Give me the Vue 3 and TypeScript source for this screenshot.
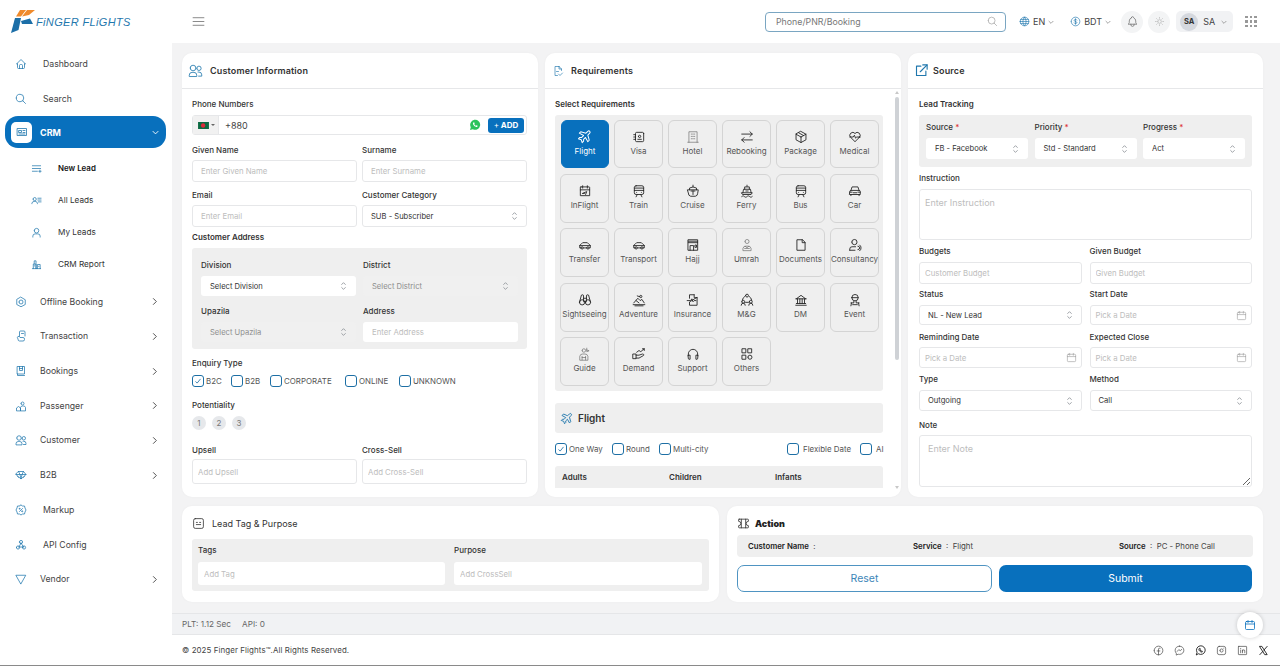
<script setup lang="ts">
import { h } from 'vue'

const c = (x: number, y: number, r: number) => `M${x - r} ${y}a${r} ${r} 0 1 0 ${2 * r} 0a${r} ${r} 0 1 0 ${-2 * r} 0`

const icons: Record<string, string[]> = {
  home: ['M5 12H3l9-9 9 9h-2', 'M5 12v7a2 2 0 0 0 2 2h10a2 2 0 0 0 2-2v-7', 'M9 21v-6a2 2 0 0 1 2-2h2a2 2 0 0 1 2 2v6'],
  search: [c(10, 10, 7.5), 'M21 21l-5.5-5.5'],
  idcard: ['M3 5h18v14H3z', 'M6 9h5v4H6z', 'M6 16h12', 'M14 9h4', 'M14 13h4'],
  newlead: ['M3 6h18', 'M3 12h18', 'M3 18h11', 'M17 18h5', 'M19.5 15.5v5'],
  allleads: [c(8, 9, 3.5), 'M2 19v-1a5 5 0 0 1 5-4h2a5 5 0 0 1 5 4v1', 'M15 7h7', 'M15 11h7', 'M16 15h6'],
  user: [c(12, 8, 5), 'M4 22v-2a5 5 0 0 1 5-5h6a5 5 0 0 1 5 5v2'],
  report: ['M3 21h18', 'M5 21V11h6v10', 'M11 21V4h-4v7', 'M14 21v-9h6v9', 'M7 15h1', 'M16.5 16h1'],
  offline: ['M12 2.5l8.5 5v9.5L12 21.500l-8.500-4.500V7.500z', c(12, 12, 4)],
  transaction: ['M9 13V4a2 2 0 0 1 2-2h7a2 2 0 0 1 2 2v8', 'M13 7h4', 'M5 14a2 2 0 0 1 3-1l2 2h6a3 3 0 0 1 3 3v1a3 3 0 0 1-3 3H9a3 3 0 0 1-3-3z'],
  bookings: ['M5 3h14v15H5z', 'M5 18v3h14', 'M9 3v8h6V3', 'M9 7h6'],
  passenger: [c(15, 7, 3), 'M3 21v-5l4-3 4 3v5z', 'M11 21v-6a4 4 0 0 1 4-3h2a4 4 0 0 1 4 3v6z'],
  users: [c(8, 8, 4.500), 'M2 21v-1.500a4.500 4.500 0 0 1 4.500-4.500h3a4.500 4.500 0 0 1 4.500 4.500V21z', c(17.5, 8.5, 3.500), 'M16 14.500h1.500a4.500 4.500 0 0 1 4.500 4.500v2h-5'],
  b2b: ['M7 5h10l5 6-10 9L2 11z', 'M2 11h20', 'M7 5l3 6 2 9 2-9 3-6', 'M5 15l2 2', 'M19 15l-2 2'],
  markup: ['M12 2l3 2h4l1 4 2 4-2 4-1 4h-4l-3 2-3-2H5l-1-4-2-4 2-4 1-4h4z', 'M9 15l6-6', c(9.5, 9.5, 1), c(14.5, 14.5, 1)],
  api: ['M12 8l-4 8', 'M8 16h9', 'M12 8l5 8', c(12, 6, 3.200), c(6, 17, 3.200), c(18, 17, 3.200)],
  vendor: ['M2.500 4.500h19L12 21.500z'],
  hamburger: ['M2 5h20', 'M2 12h20', 'M2 19h20'],
  globe: [c(12, 12, 9.500), 'M2.500 12h19', 'M3.500 7.500h17', 'M3.500 16.500h17', 'M12 2.500a14 14 0 0 1 0 19a14 14 0 0 1 0-19'],
  dollar: [c(12, 12, 9.500), 'M15 9a3 2.200 0 0 0-3-1.500c-2 0-3 1-3 2.200 0 3 6 1.600 6 4.600 0 1.200-1 2.200-3 2.200a3 2.200 0 0 1-3-1.500', 'M12 6v12'],
  bell: ['M10 5a2 2 0 1 1 4 0a7 7 0 0 1 4 6v3a4 4 0 0 0 2 3H4a4 4 0 0 0 2-3v-3a7 7 0 0 1 4-6', 'M9 17v1a3 3 0 0 0 6 0v-1'],
  sun: [c(12, 12, 4), 'M3 12h2', 'M19 12h2', 'M12 3v2', 'M12 19v2', 'M5.600 5.600l1.400 1.400', 'M17 17l1.400 1.400', 'M17 7l1.400-1.400', 'M5.600 18.400L7 17'],
  reqfile: ['M14 3H6v18h5', 'M14 3l5 5v3', 'M14 3v5h5', 'M9 13h4', 'M13 18l3 3 5-5'],
  external: ['M11 5H4v15h15v-7', 'M10 14L21 3', 'M14 3h7v7'],
  tagface: ['M6 3h12a3 3 0 0 1 3 3v12a3 3 0 0 1-3 3H6a3 3 0 0 1-3-3V6a3 3 0 0 1 3-3z', 'M8 10h2', 'M14 10h2', 'M8 14h8'],
  ticket: ['M4 4h16a1 1 0 0 1 1 1v3a4 4 0 0 0 0 8v3a1 1 0 0 1-1 1H4a1 1 0 0 1-1-1v-3a4 4 0 0 0 0-8V5a1 1 0 0 1 1-1z', 'M8 4v16', 'M16 4v16'],
  calendar: ['M5 5h14a2 2 0 0 1 2 2v12a2 2 0 0 1-2 2H5a2 2 0 0 1-2-2V7a2 2 0 0 1 2-2z', 'M3 10h18', 'M8 3v4', 'M16 3v4'],
  plane: ['M16 10h4a2 2 0 0 1 0 4h-4l-4 7h-3l2-7H7l-2 2H2l2-4-2-4h3l2 2h4L9 3h3z'],
  visa: ['M20 6v12a2 2 0 0 1-2 2H8a2 2 0 0 1-2-2V6a2 2 0 0 1 2-2h10a2 2 0 0 1 2 2z', 'M10 16h6', c(13, 11, 2), 'M3 8h3', 'M3 12h3', 'M3 16h3'],
  hotel: ['M5 21V3h14v18', 'M3 21h18', 'M9 7h2', 'M13 7h2', 'M9 11h2', 'M13 11h2', 'M9 15h2', 'M13 15h2'],
  rebooking: ['M21 7H3', 'M17 11l4-4-4-4', 'M7 21l-4-4 4-4', 'M3 17h18'],
  pkg: ['M12 2.500l8.500 4.700v9.600L12 21.500l-8.500-4.700V7.200z', 'M12 12l8.500-4.800', 'M12 12v9.500', 'M12 12L3.500 7.200', 'M8 4.800l8.500 4.800'],
  medical: ['M19.500 12.600L12 20l-7.500-7.400A5 5 0 1 1 12 6a5 5 0 1 1 7.500 6.600z', 'M3 12h6l2-3 2 5 2-2h6'],
  inflight: ['M5 5h14a1 1 0 0 1 1 1v14H4V6a1 1 0 0 1 1-1z', 'M4 10h16', 'M8 3v4', 'M16 3v4', 'M8 16l7-3-2 5-1.500-1.500z'],
  train: ['M7 3h10a3 3 0 0 1 3 3v9a3 3 0 0 1-3 3H7a3 3 0 0 1-3-3V6a3 3 0 0 1 3-3z', 'M4 11h16', 'M4 7h16', 'M8 14.500h.01', 'M16 14.500h.01', 'M7 22l2-4', 'M17 22l-2-4'],
  cruise: ['M12 2v3', 'M6 10V7l6-2 6 2v3', 'M3 10h18l-1 6a5 5 0 0 1-4 5H8a5 5 0 0 1-4-5z', 'M8.500 12h7', 'M12 12v6'],
  ferry: ['M12 2v2', 'M8 9V5h8v4', 'M5 15l1-6h12l1 6', 'M3 15h18l-2 3H5z', 'M3 21.500c2-1.500 3-1.500 4.500 0s3 1.500 4.500 0 3-1.500 4.500 0 3 1.500 4.500 0', 'M10 12h4'],
  car: ['M5 11l2-6h10l2 6', 'M3 13a2 2 0 0 1 2-2h14a2 2 0 0 1 2 2v5H3z', 'M3 14h4', 'M17 14h4', 'M9 15h6', 'M5 18v2', 'M19 18v2'],
  transfer: ['M5 17H3v-4a3 3 0 0 1 2-2l3-3h8l3 3a3 3 0 0 1 2 2v4h-2', 'M9 17h6', c(7, 17, 2), c(17, 17, 2), 'M3 13h18'],
  hajj: ['M4 3h16v18H4z', 'M4 8h16', 'M4 5.500h16', 'M7 21v-8h6v8', 'M16 12h2v4h-2z'],
  umrah: [c(12, 6, 3.500), 'M5 21v-3a5 5 0 0 1 5-4h4a5 5 0 0 1 5 4v3z', 'M9 14l3 3 3-3', 'M8 18h8'],
  docs: ['M14 3H5v18h14V8z', 'M14 3v5h5'],
  consult: [c(11, 7, 4.500), 'M3 21v-2a4 4 0 0 1 4-4h6', 'M3 21h9', 'M17 14a3 3 0 0 1 0 6', 'M20 12a6 6 0 0 1 0 10'],
  binoc: [c(7, 16, 4.500), c(17, 16, 4.500), 'M2.500 16l3-11a2 2 0 0 1 4 0v9', 'M21.500 16l-3-11a2 2 0 0 0-4 0v9', 'M9.500 9h5', 'M10 15h4'],
  adventure: [c(15, 6, 2), 'M3 17l7-8 4 4 3-2 4 6', 'M2 20h20', 'M5 22h14', 'M7 13l5 4', 'M9 5l3 1'],
  insurance: ['M14 3H6v6', 'M6 16v5h13V8z', 'M14 3v5h5', 'M2 13h6l2-3 2 5 2-2h3'],
  mng: [c(12, 4.500, 2.500), c(5.500, 15, 2.500), c(18.500, 15, 2.500), 'M8 6a9 9 0 0 0-4 6', 'M16 6a9 9 0 0 1 4 6', 'M2 21a3.500 3.500 0 0 1 7 0', 'M15 21a3.500 3.500 0 0 1 7 0', 'M9.500 16h5'],
  bank: ['M3 21h18', 'M3 10h18', 'M4 10l8-6 8 6', 'M6 10v8', 'M10 10v8', 'M14 10v8', 'M18 10v8', 'M4 18h16'],
  event: [c(12, 8, 5.500), 'M6.500 8h11', 'M10 14v3h-5', 'M14 14v3h5', 'M6 17l-1 5', 'M18 17l1 5', 'M8 20h8'],
  guide: [c(10, 6, 3), 'M15 2v6l4-1.500L15 5', 'M3 22v-6a5 5 0 0 1 5-4h4a5 5 0 0 1 5 4v6z', 'M7 16v6', 'M13 16v6', 'M7 18h6'],
  demand: ['M2 12h5v8H2z', 'M7 14h5l6-2a1.500 1.500 0 0 1 1 3l-7 4H7', 'M8 9l4-3 3 2 6-5', 'M18 3h3v3'],
  support: ['M4 15v-3a8 8 0 0 1 16 0v3', 'M4 14h3v7H5a1 1 0 0 1-1-1z', 'M20 14h-3v7h2a1 1 0 0 0 1-1z'],
  others: ['M4 3h6v7H4z', 'M14 3h6v7h-6z', 'M4 14h6v7H4z', c(17, 17.500, 3.500)],
  fb: [c(12, 12, 9.500), 'M15.500 7H14a2 2 0 0 0-2 2v12.500', 'M9 13h6'],
  msg: ['M12 2.500c5.500 0 9.500 4 9.500 9s-4 9-9.500 9a11 11 0 0 1-3-.4L5 22v-4a9 9 0 0 1-2.500-6.500c0-5 4-9 9.500-9z', 'M7 14l3.500-4 3 2.500 3.500-3'],
  wa: ['M3 21l1.500-5A9.500 9.500 0 1 1 8 19.500z', 'M9 8c-1 1-1 3 1 5s4 3 6 2l-.5-2-2 .3-2.500-2.500.4-2z'],
  ig: ['M7 3h10a4 4 0 0 1 4 4v10a4 4 0 0 1-4 4H7a4 4 0 0 1-4-4V7a4 4 0 0 1 4-4z', c(12, 12, 3.500), 'M17 7h.01'],
  li: ['M4 3h16a1 1 0 0 1 1 1v16a1 1 0 0 1-1 1H4a1 1 0 0 1-1-1V4a1 1 0 0 1 1-1z', 'M8 11v6', 'M8 7.500v.5', 'M12 17v-6', 'M12 13a2.500 2.500 0 0 1 5 0v4'],
  x: ['M4 3h4.500L20 21h-4.500z', 'M20 3l-7 8', 'M11 13.500L4 21']
}

const Ico: any = (props: { n: string }) =>
  h('svg', { viewBox: '0 0 24 24', fill: 'none', stroke: 'currentColor', 'stroke-width': 1.600, 'stroke-linecap': 'round', 'stroke-linejoin': 'round' },
    (icons[props.n] || []).map((d) => h('path', { d })))
Ico.props = ['n']

const Updown: any = () =>
  h('svg', { viewBox: '0 0 8 12', fill: 'none', stroke: '#8a8f95', 'stroke-width': 1, class: 'updown' }, [
    h('path', { d: 'M1.500 4.500L4 2l2.500 2.500' }), h('path', { d: 'M1.500 7.500L4 10l2.500-2.500' })
  ])

const topNav = [
  { label: 'Dashboard', icon: 'home', plain: true },
  { label: 'Search', icon: 'search', plain: true }
]
const subNav = [
  { label: 'New Lead', icon: 'newlead', active: true },
  { label: 'All Leads', icon: 'allleads' },
  { label: 'My Leads', icon: 'user' },
  { label: 'CRM Report', icon: 'report' }
]
const restNav = [
  { label: 'Offline Booking', icon: 'offline', arrow: true },
  { label: 'Transaction', icon: 'transaction', arrow: true },
  { label: 'Bookings', icon: 'bookings', arrow: true },
  { label: 'Passenger', icon: 'passenger', arrow: true },
  { label: 'Customer', icon: 'users', arrow: true },
  { label: 'B2B', icon: 'b2b', arrow: true },
  { label: 'Markup', icon: 'markup', arrow: false },
  { label: 'API Config', icon: 'api', arrow: false },
  { label: 'Vendor', icon: 'vendor', arrow: true }
]
const tiles = [
  ['Flight', 'plane'], ['Visa', 'visa'], ['Hotel', 'hotel'], ['Rebooking', 'rebooking'], ['Package', 'pkg'], ['Medical', 'medical'],
  ['InFlight', 'inflight'], ['Train', 'train'], ['Cruise', 'cruise'], ['Ferry', 'ferry'], ['Bus', 'train'], ['Car', 'car'],
  ['Transfer', 'transfer'], ['Transport', 'transfer'], ['Hajj', 'hajj'], ['Umrah', 'umrah'], ['Documents', 'docs'], ['Consultancy', 'consult'],
  ['Sightseeing', 'binoc'], ['Adventure', 'adventure'], ['Insurance', 'insurance'], ['M&G', 'mng'], ['DM', 'bank'], ['Event', 'event'],
  ['Guide', 'guide'], ['Demand', 'demand'], ['Support', 'support'], ['Others', 'others']
]
const enquiry = [
  { t: 'B2C', on: true }, { t: 'B2B', on: false }, { t: 'CORPORATE', on: false }, { t: 'ONLINE', on: false }, { t: 'UNKNOWN', on: false }
]
const socials = ['fb', 'msg', 'wa', 'ig', 'li', 'x']
</script>

<template>
  <div class="app">
    <aside class="side">
      <div class="logo">
        <svg class="logo-mark" viewBox="0 0 24 24">
          <path d="M4 9h6L7.500 21 0 24z" fill="#1c6fa8" />
          <path d="M10 12l9-2.500 3 5.500H11z" fill="#1c6fa8" />
          <path d="M5 7.500L9 1h6l-5 6.500z" fill="#ef8a2c" />
          <path d="M11 7.500L16 1h8l-6 5z" fill="#ef8a2c" />
        </svg>
        <span class="logo-text">FiNGER FLiGHTS</span>
      </div>
      <nav class="nav">
        <a v-for="n in topNav" :key="n.label" class="nav-item wide"><Ico :n="n.icon" class="nav-ico" /><span>{{ n.label }}</span></a>
        <a class="crm">
          <span class="crm-tile"><Ico n="idcard" /></span>
          <span class="crm-label">CRM</span>
          <svg class="chev crm-chev" viewBox="0 0 12 12"><path d="M3 4.500L6 7.500l3-3" /></svg>
        </a>
        <div class="subnav">
          <a v-for="s in subNav" :key="s.label" class="sub-item" :class="{ on: s.active }"><Ico :n="s.icon" class="sub-ico" /><span>{{ s.label }}</span></a>
        </div>
        <div class="rest">
          <a v-for="n in restNav" :key="n.label" class="nav-item" :class="{ wide: !n.arrow }">
            <Ico :n="n.icon" class="nav-ico" /><span>{{ n.label }}</span>
            <svg v-if="n.arrow" class="chev right" viewBox="0 0 12 12"><path d="M4.500 2.500L8 6l-3.500 3.500" /></svg>
          </a>
        </div>
      </nav>
    </aside>

    <div class="main">
      <header class="top">
        <Ico n="hamburger" class="burger" />
        <div class="search"><span>Phone/PNR/Booking</span><Ico n="search" class="search-ico" /></div>
        <div class="tool en"><Ico n="globe" class="tool-ico" /><span>EN</span><svg class="chev thin" viewBox="0 0 12 12"><path d="M2.500 4.500L6 8l3.500-3.500" /></svg></div>
        <div class="tool bdt"><Ico n="dollar" class="tool-ico" /><span>BDT</span><svg class="chev thin" viewBox="0 0 12 12"><path d="M2.500 4.500L6 8l3.500-3.500" /></svg></div>
        <div class="round first"><Ico n="bell" class="bell" /></div>
        <div class="round second"><Ico n="sun" class="sun" /></div>
        <div class="profile"><span class="avatar">SA</span><span>SA</span><svg class="chev thin" viewBox="0 0 12 12"><path d="M2.500 4.500L6 8l3.500-3.500" /></svg></div>
        <div class="apps"><i v-for="i in 9" :key="i"></i></div>
      </header>

      <div class="content">
        <div class="cols">
          <section class="card">
            <div class="card-head"><Ico n="users" class="head-ico" /><span class="head-a">Customer Information</span></div>
            <div class="body">
              <div class="lbl pt9">Phone Numbers</div>
              <div class="phone mt5">
                <div class="flag-box">
                  <svg class="flag" viewBox="0 0 14 9"><rect width="14" height="9" fill="#0b6a42" /><circle cx="6.500" cy="4.500" r="2.800" fill="#d92b3a" /></svg>
                  <i class="caret"></i>
                </div>
                <span class="phone-val">+880</span>
                <svg class="wa-ico" viewBox="0 0 24 24"><path d="M2 22l1.600-5.600A10 10 0 1 1 7.700 20.400z" fill="#2cc35c" /><path d="M9 7c-1.600 1-1.600 3.400.8 6.100 2.600 2.800 5.200 3.400 6.700 2.300.8-.6.900-1.500.7-1.800l-2.300-1.200-1.100 1.200c-1.400-.4-3-2-3.400-3.400l1.100-1-1-2.400c-.4-.3-1.300-.5-1.500.2z" fill="#fff" /></svg>
                <button class="add"><span class="plus">+</span> ADD</button>
              </div>
              <div class="two mt9">
                <div><div class="lbl">Given Name</div><input class="inp h22 mt4" placeholder="Enter Given Name" /></div>
                <div><div class="lbl">Surname</div><input class="inp h22 mt4" placeholder="Enter Surname" /></div>
              </div>
              <div class="two mt7">
                <div><div class="lbl">Email</div><input class="inp h22 mt4" placeholder="Enter Email" /></div>
                <div><div class="lbl">Customer Category</div><div class="sel h22 mt4"><span>SUB - Subscriber</span><Updown /></div></div>
              </div>
              <div class="lbl mt4 dark">Customer Address</div>
              <div class="gray addr mt5">
                <div class="two g7">
                  <div><div class="lbl">Division</div><div class="sel bare h20 mt5"><span>Select Division</span><Updown /></div></div>
                  <div><div class="lbl">District</div><div class="sel bare dis h20 mt5"><span>Select District</span><Updown /></div></div>
                </div>
                <div class="two g7 mt9">
                  <div><div class="lbl">Upazila</div><div class="sel bare dis h20 mt5"><span>Select Upazila</span><Updown /></div></div>
                  <div><div class="lbl">Address</div><input class="inp bare h20 mt5" placeholder="Enter Address" /></div>
                </div>
              </div>
              <div class="lbl mt8">Enquiry Type</div>
              <div class="checks mt6">
                <label v-for="e in enquiry" :key="e.t" class="chk"><span class="box" :class="{ on: e.on }"><svg v-if="e.on" viewBox="0 0 12 12"><path d="M3 6.500l2 2 4-5" /></svg></span>{{ e.t }}</label>
              </div>
              <div class="lbl mt12">Potentiality</div>
              <div class="pots mt5"><span>1</span><span>2</span><span>3</span></div>
              <div class="two mt14">
                <div><div class="lbl">Upsell</div><input class="inp h25 mt3 tight" placeholder="Add Upsell" /></div>
                <div><div class="lbl">Cross-Sell</div><input class="inp h25 mt3 tight" placeholder="Add Cross-Sell" /></div>
              </div>
            </div>
          </section>

          <section class="card req">
            <div class="card-head"><Ico n="reqfile" class="head-ico small" /><span class="head-b">Requirements</span></div>
            <div class="scroll">
              <div class="lbl pt9 dark">Select Requirements</div>
              <div class="gray tiles mt5">
                <div v-for="(t, i) in tiles" :key="t[0]" class="tile" :class="{ active: i === 0 }">
                  <Ico :n="t[1]" class="tile-ico" :class="{ rot: t[1] === 'plane', soft: t[1] === 'hotel' || t[1] === 'umrah' || t[1] === 'guide' }" />
                  <span>{{ t[0] }}</span>
                </div>
              </div>
              <div class="gray flight-bar"><Ico n="plane" class="flight-ico rot" /><span>Flight</span></div>
              <div class="trip">
                <label class="chk"><span class="box on"><svg viewBox="0 0 12 12"><path d="M3 6.500l2 2 4-5" /></svg></span>One Way</label>
                <label class="chk"><span class="box"></span>Round</label>
                <label class="chk"><span class="box"></span>Multi-city</label>
                <label class="chk"><span class="box"></span><em>Flexible Date</em></label>
                <label class="chk"><span class="box"></span><em>AI</em></label>
              </div>
              <div class="gray pax"><span>Adults</span><span>Children</span><span>Infants</span></div>
            </div>
            <div class="bar"><i class="up"></i><b></b><i class="down"></i></div>
          </section>

          <section class="card">
            <div class="card-head"><Ico n="external" class="head-ico src" /><span class="head-b">Source</span></div>
            <div class="body">
              <div class="lbl pt9 dark">Lead Tracking</div>
              <div class="gray track mt5">
                <div><div class="lbl">Source <b class="req-star">*</b></div><div class="sel bare h21 mt5"><span>FB - Facebook</span><Updown /></div></div>
                <div><div class="lbl">Priority <b class="req-star">*</b></div><div class="sel bare h21 mt5"><span>Std - Standard</span><Updown /></div></div>
                <div><div class="lbl">Progress <b class="req-star">*</b></div><div class="sel bare h21 mt5"><span>Act</span><Updown /></div></div>
              </div>
              <div class="lbl mt5">Instruction</div>
              <textarea class="area h51 mt5" placeholder="Enter Instruction"></textarea>
              <div class="two g8 mt5">
                <div><div class="lbl">Budgets</div><input class="inp h22 mt5 tight" placeholder="Customer Budget" /></div>
                <div><div class="lbl">Given Budget</div><input class="inp h22 mt5 tight" placeholder="Given Budget" /></div>
              </div>
              <div class="two g8 mt4">
                <div><div class="lbl">Status</div><div class="sel h20 mt5"><span>NL - New Lead</span><Updown /></div></div>
                <div><div class="lbl">Start Date</div><div class="date h20 mt5"><span>Pick a Date</span><Ico n="calendar" class="cal" /></div></div>
              </div>
              <div class="two g8 mt6">
                <div><div class="lbl">Reminding Date</div><div class="date h21 mt4"><span>Pick a Date</span><Ico n="calendar" class="cal" /></div></div>
                <div><div class="lbl">Expected Close</div><div class="date h21 mt4"><span>Pick a Date</span><Ico n="calendar" class="cal" /></div></div>
              </div>
              <div class="two g8 mt5">
                <div><div class="lbl">Type</div><div class="sel h21 mt5"><span>Outgoing</span><Updown /></div></div>
                <div><div class="lbl">Method</div><div class="sel h21 mt5"><span>Call</span><Updown /></div></div>
              </div>
              <div class="lbl mt8">Note</div>
              <textarea class="area small h52 mt4" placeholder="Enter Note"></textarea>
            </div>
          </section>
        </div>

        <div class="bottoms">
          <section class="card low">
            <div class="low-head tag"><Ico n="tagface" class="low-ico" /><span>Lead Tag &amp; Purpose</span></div>
            <div class="gray tagbox">
              <div><div class="lbl">Tags</div><input class="inp bare h23 tight" placeholder="Add Tag" /></div>
              <div><div class="lbl">Purpose</div><input class="inp bare h23 tight" placeholder="Add CrossSell" /></div>
            </div>
          </section>
          <section class="card low">
            <div class="low-head act"><Ico n="ticket" class="low-ico" /><b>Action</b></div>
            <div class="gray sumbox">
              <span class="s1"><b>Customer Name</b>&nbsp; :</span>
              <span class="s2"><b>Service</b>&nbsp; : &nbsp;Flight</span>
              <span class="s3"><b>Source</b>&nbsp; : &nbsp;PC - Phone Call</span>
            </div>
            <div class="btns"><button class="reset">Reset</button><button class="submit">Submit</button></div>
          </section>
        </div>
      </div>

      <div class="status"><span>PLT: 1.12 Sec</span><span>API: 0</span></div>
      <footer class="foot">
        <span>© 2025 Finger Flights™.All Rights Reserved.</span>
        <div class="social"><Ico v-for="s in socials" :key="s" :n="s" class="soc" :class="{ bold: s === 'wa' || s === 'x' }" /></div>
      </footer>
      <div class="float"><Ico n="calendar" /></div>
    </div>
  </div>
</template>

<style>
html, body { margin: 0; background: #fff; }
</style>

<style scoped>
* { box-sizing: border-box; }
.app { display: flex; width: 1280px; height: 666px; overflow: hidden; font-family: Inter, "Liberation Sans", sans-serif; color: #333; font-size: 8px; border-bottom: 1px solid #8a8a8a; }

.side { width: 172px; flex: none; background: #fff; }
.logo { height: 43px; display: flex; align-items: center; padding-left: 11px; }
.logo-mark { width: 24px; height: 24px; margin-top: -1px; }
.logo-text { margin-left: 1px; font-family: "Liberation Sans", sans-serif; font-style: italic; font-size: 11px; letter-spacing: .35px; color: #1f77ad; font-weight: 400; }
.nav { padding-top: 4px; }
.nav-item { display: flex; align-items: center; height: 34.700px; padding-left: 15px; color: #444; font-size: 8.700px; position: relative; }
.nav-ico { width: 12px; height: 12px; color: #1f77ad; margin-right: 13px; flex: none; stroke-width: 1.500; }
.nav-item.wide .nav-ico { margin-right: 16px; }
.chev { fill: none; stroke: #444; stroke-width: 1; }
.chev.right { position: absolute; left: 149px; width: 11px; height: 11px; }
.crm { display: flex; align-items: center; margin: 0 6px 0 5px; height: 32px; border-radius: 13px; background: #0870bd; color: #fff; font-weight: 700; font-size: 9px; padding-left: 6px; position: relative; }
.crm-tile { width: 21px; height: 21px; background: #fff; border-radius: 5px; display: flex; align-items: center; justify-content: center; margin-right: 8px; color: #1f77ad; }
.crm-tile svg { width: 12px; height: 12px; }
.crm-chev { position: absolute; right: 5px; width: 11px; height: 11px; stroke: #fff; }
.subnav { padding-top: 4px; padding-bottom: 4px; }
.sub-item { display: flex; align-items: center; height: 32px; padding-left: 31px; color: #333; font-size: 8.200px; }
.sub-item.on { font-weight: 600; color: #111; font-size: 7.900px; }
.sub-ico { width: 11px; height: 11px; color: #1f77ad; margin-right: 16px; flex: none; }

.main { flex: 1; min-width: 0; display: flex; flex-direction: column; position: relative; background: #f3f3f4; }
.top { height: 43px; flex: none; background: #fff; display: flex; align-items: center; color: #555; }
.burger { width: 13px; height: 13px; margin-left: 20px; color: #666; stroke-width: 1.400; }
.search { margin-left: 560px; width: 241px; height: 20px; border: 1px solid #7aa6c2; border-radius: 4px; display: flex; align-items: center; justify-content: space-between; padding: 0 7px 0 10px; color: #777; font-size: 8.800px; }
.search-ico { width: 11px; height: 11px; color: #888; stroke-width: 1.200; }
.tool { display: flex; align-items: center; font-size: 9px; color: #444; }
.tool-ico { width: 11px; height: 11px; color: #1f77ad; margin-right: 3px; stroke-width: 1.400; }
.chev.thin { width: 8px; height: 8px; margin-left: 2px; stroke: #777; }
.en { margin-left: 13px; }
.bdt { margin-left: 15px; }
.round { width: 22px; height: 22px; border-radius: 50%; background: #f3f4f5; display: flex; align-items: center; justify-content: center; }
.round.first { margin-left: 9px; }
.round.second { margin-left: 5px; }
.bell { width: 13px; height: 13px; color: #666; stroke-width: 1.300; }
.sun { width: 11px; height: 11px; color: #aaa; stroke-width: 1.300; }
.profile { margin-left: 6px; width: 57px; height: 21px; border-radius: 5px; background: #f1f2f4; display: flex; align-items: center; padding-left: 4px; font-size: 9px; color: #444; }
.avatar { width: 18px; height: 18px; border-radius: 50%; background: #d5d8de; font-size: 7.500px; font-weight: 700; display: flex; align-items: center; justify-content: center; margin-right: 5px; color: #333; }
.profile .chev { margin-left: 5px; }
.apps { margin-left: 12px; width: 12px; display: grid; grid-template-columns: repeat(3, 2.500px); gap: 2px; }
.apps i { width: 2.500px; height: 2.500px; background: #999; display: block; }

.content { flex: 1; min-height: 0; padding: 10px 17px 11px 10px; display: flex; flex-direction: column; gap: 9px; }
.cols { display: grid; grid-template-columns: 356px 356px 355px; gap: 7px; height: 444px; }
.bottoms { display: grid; grid-template-columns: 537px 536px; gap: 8px; height: 96px; }
.card { background: #fff; border-radius: 10px; position: relative; overflow: hidden; box-shadow: 0 0 3px rgba(0,0,0,.03); }
.card-head { height: 36px; border-bottom: 1px solid #e6e7e9; display: flex; align-items: center; padding-left: 6px; font-weight: 600; color: #333; font-size: 9px; letter-spacing: .15px; }
.head-ico { width: 15px; height: 15px; color: #1f77ad; margin-right: 7px; stroke-width: 1.300; }
.head-ico.small { width: 12px; height: 12px; margin: 0 7px 0 1px; }
.head-ico.src { margin-right: 4px; stroke-width: 1.800; }
.body { padding: 0 11px 0 10px; }
.card:nth-child(3) .body { padding: 0 11px 0 11px; }

.lbl { height: 12px; line-height: 12px; font-size: 8px; font-weight: 500; color: #333; white-space: nowrap; }
.lbl.dark { font-weight: 600; }
.pt9 { margin-top: 9px; }
.mt3 { margin-top: 3px; } .mt4 { margin-top: 4px; } .mt5 { margin-top: 5px; } .mt6 { margin-top: 6px; } .mt7 { margin-top: 7px; } .mt8 { margin-top: 8px; } .mt9 { margin-top: 9px; } .mt12 { margin-top: 12px; } .mt14 { margin-top: 14px; }
.h20 { height: 20px; } .h21 { height: 21px; } .h22 { height: 22px; } .h23 { height: 23px; } .h25 { height: 25px; } .h51 { height: 51px; } .h52 { height: 52px; }

.two { display: grid; grid-template-columns: 1fr 1fr; gap: 5px; }
.two.g7 { gap: 7px; }
.two.g8 { gap: 8px; }
.inp, .sel, .date, .area { display: flex; width: 100%; align-items: center; border: 1px solid #e6e7e9; border-radius: 3px; background: #fff; font-family: inherit; font-size: 7.800px; padding: 0 8px; color: #333; outline: none; }
.inp.tight, .date { padding-left: 5px; }
.inp::placeholder, .area::placeholder { color: #bdbdbd; opacity: 1; }
.sel { justify-content: space-between; padding-right: 8px; font-size: 7.600px; }
.bare { border-color: transparent; }
.sel.dis { background: #f0f0f0; color: #8e8e8e; }
.updown { width: 7px; height: 10px; flex: none; }
.date { justify-content: space-between; color: #bdbdbd; padding-right: 4px; }
.cal { width: 11px; height: 11px; color: #999; stroke-width: 1.300; }
.area { display: block; resize: none; font-size: 9px; padding: 7px 5px; }
.area.small { padding: 7px 8px; resize: both; }

.gray { background: #efefef; border-radius: 3px; }
.phone { height: 20px; border: 1px solid #e6e7e9; border-radius: 3px; display: flex; align-items: center; position: relative; }
.flag-box { width: 26px; height: 100%; background: #f1f1f1; border-right: 1px solid #e6e7e9; display: flex; align-items: center; padding-left: 5px; }
.flag { width: 11px; height: 7px; }
.caret { margin-left: 2px; border: 2px solid transparent; border-top: 2.500px solid #666; border-bottom: 0; }
.phone-val { margin-left: 6px; font-size: 9px; color: #444; flex: 1; }
.wa-ico { width: 12px; height: 12px; margin-right: 7px; }
.add { width: 36px; height: 15px; background: #0870bd; color: #fff; border: 0; border-radius: 3px; font-family: inherit; font-weight: 700; font-size: 8px; margin-right: 2px; padding: 0; }
.plus { font-weight: 400; }

.addr { height: 101px; padding: 11px 9px 0; }
.checks { display: grid; grid-template-columns: 39px 39px 75px 54px auto; height: 12px; }
.chk { display: flex; align-items: center; font-size: 7.900px; color: #555; white-space: nowrap; }
.chk em { font-style: normal; }
.box { width: 12px; height: 12px; border: 1px solid #1d6fa5; border-radius: 3px; margin-right: 2px; display: inline-flex; flex: none; }
.box svg { width: 10px; height: 10px; fill: none; stroke: #1d6fa5; stroke-width: 1; }
.pots { display: flex; gap: 6px; }
.pots span { width: 14px; height: 14px; border-radius: 50%; background: #e6e8eb; color: #777; display: flex; align-items: center; justify-content: center; font-size: 8px; }

.scroll { padding: 0 18px 0 10px; height: 399px; overflow: hidden; }
.tiles { display: grid; grid-template-columns: repeat(6, 49px); grid-template-rows: 48px repeat(4, 49px); gap: 5.500px 5px; padding: 5px; height: 276px; }
.tile { border: 1px solid #d4d4d4; border-radius: 6px; display: flex; flex-direction: column; align-items: center; padding-top: 9px; color: #555; font-size: 8px; white-space: nowrap; }
.tile span { margin-top: 2px; }
.tile-ico { width: 14px; height: 14px; color: #222; stroke-width: 1.500; flex: none; }
.tile-ico.soft { color: #666; stroke-width: 1.100; }
.tile-ico.rot { width: 16px; height: 16px; margin-top: -2px; }
.rot { transform: rotate(-45deg); }
.tile.active { background: #0870bd; color: #fff; border-color: #0870bd; margin-left: 1px; }
.tile.active .tile-ico { color: #fff; }
.flight-bar { margin-top: 12px; height: 30px; display: flex; align-items: center; padding-left: 5px; font-size: 10px; font-weight: 600; color: #333; }
.flight-ico { width: 14px; height: 14px; color: #1f77ad; margin-right: 4px; stroke-width: 1.500; }
.trip { margin-top: 10px; display: grid; grid-template-columns: 57px 47px 128px 73px 23px; height: 12px; width: 328px; }
.trip .chk em { margin-left: 2px; }
.pax { margin-top: 11px; height: 24px; display: grid; grid-template-columns: 107px 106px 1fr; padding: 5px 0 0 7px; font-weight: 600; font-size: 8px; line-height: 13px; border-radius: 3px 3px 0 0; }
.bar { position: absolute; top: 36px; right: 1px; width: 5px; bottom: 6px; }
.bar b { position: absolute; top: 8px; left: 0; width: 4px; height: 263px; background: #cfd2d6; border-radius: 2px; }
.bar i { position: absolute; left: 0; border: 2px solid transparent; }
.bar .up { top: 2px; border-bottom: 3px solid #c8c8c8; border-top: 0; }
.bar .down { bottom: 2px; border-top: 3px solid #c8c8c8; border-bottom: 0; }

.track { height: 52px; padding: 6px 7px 0; display: grid; grid-template-columns: 102px 102px 102px; gap: 6.500px; }
.req-star { color: #d33; font-weight: 500; }

.low { padding: 0 10px; }
.low-head { display: flex; align-items: center; font-size: 9px; color: #333; }
.low-head.tag { height: 33px; padding-top: 2px; }
.low-ico { width: 13px; height: 13px; color: #333; margin-right: 7px; stroke-width: 1.500; }
.low-head.act { height: 29px; padding-top: 6px; font-weight: 700; color: #222; }
.low-head.act .low-ico { margin-right: 5px; }
.tagbox { height: 52px; padding: 5px 6px 0; display: grid; grid-template-columns: 247px 248px; gap: 9px; }
.tagbox .lbl { height: 18px; line-height: 12px; }
.sumbox { height: 22px; position: relative; display: flex; align-items: center; font-size: 7.800px; color: #444; border-radius: 4px; }
.sumbox b { font-weight: 600; color: #222; }
.sumbox span { position: absolute; white-space: nowrap; }
.s1 { left: 11px; } .s2 { left: 176px; } .s3 { left: 382px; }
.btns { margin-top: 8px; display: grid; grid-template-columns: 255px 253px; gap: 7px; }
.btns button { height: 27px; border-radius: 7px; font-family: inherit; font-size: 10.500px; }
.reset { background: #fff; border: 1px solid #4f94c2; color: #3d86b8; }
.submit { background: #0870bd; border: 0; color: #fff; }

.status { height: 21px; flex: none; background: #f1f2f4; border-top: 1px solid #e5e6e8; display: flex; gap: 11px; align-items: center; padding-left: 10px; font-size: 8.200px; color: #666; }
.foot { height: 31px; flex: none; background: #fff; border-top: 1px solid #e5e6e8; display: flex; align-items: center; justify-content: space-between; padding: 0 11px 0 10px; font-size: 7.900px; color: #444; letter-spacing: .1px; }
.social { display: flex; gap: 10px; }
.soc { width: 11px; height: 11px; color: #444; stroke-width: 1.500; }
.soc.bold { color: #222; stroke-width: 2; }
.float { position: absolute; left: 1065px; top: 612px; width: 26px; height: 26px; border-radius: 50%; background: #fff; box-shadow: 0 0 4px rgba(0,0,0,.18); display: flex; align-items: center; justify-content: center; color: #0870bd; z-index: 2; }
.float svg { width: 12px; height: 12px; }
</style>
